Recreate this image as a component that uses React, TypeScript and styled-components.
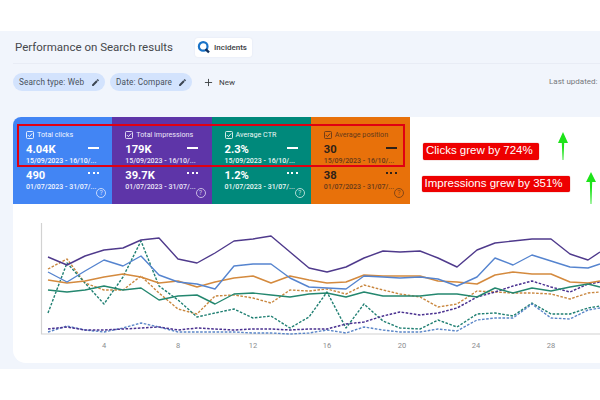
import React from "react";
import styled, { createGlobalStyle } from "styled-components";
import { Plus } from "lucide-react";

const Global = createGlobalStyle`
  html, body { margin: 0; padding: 0; background: #fff; width: 600px; height: 400px; overflow: hidden; }
  * { box-sizing: border-box; }
`;

const Page = styled.div`
  width: 600px;
  height: 400px;
  padding-top: 31px;
  background: #fff;
  font-family: Roboto, "Liberation Sans", sans-serif;
`;
const Surface = styled.main`
  height: 338px;
  background: #f1f5fc;
  padding-left: 13px;
  display: flex;
  flex-direction: column;
`;
const Header = styled.header`
  height: 33px;
  border-bottom: 1px solid #e8ecf5;
  padding: 0 0 0 2px;
  display: flex;
  align-items: center;
`;
const Title = styled.h1`
  margin: 0;
  font-size: 11.5px;
  font-weight: 400;
  color: #46484c;
  width: 180px;
  white-space: nowrap;
`;
const Badge = styled.div`
  width: 57px;
  height: 19px;
  background: #fff;
  border-radius: 3px;
  box-shadow: 0 0 2px #dfe4ee;
  display: flex;
  align-items: center;
  gap: 3px;
  padding-left: 2px;
  font-size: 8px;
  font-weight: 500;
  color: #3c4043;
`;
const Filters = styled.div`
  height: 53px;
  padding-top: 9px;
  display: flex;
  align-items: flex-start;
`;
const Chip = styled.div<{ $w: number }>`
  width: ${(p) => p.$w}px;
  height: 18px;
  margin-right: 5px;
  padding: 0 5px 0 6px;
  border-radius: 9px;
  background: #d3e3fd;
  color: #47505c;
  font-size: 8.2px;
  font-weight: 400;
  letter-spacing: 0.15px;
  display: flex;
  align-items: center;
  justify-content: space-between;
  white-space: nowrap;
`;
const NewButton = styled.div`
  margin-left: 6px;
  height: 18px;
  display: flex;
  align-items: center;
  gap: 5px;
  font-size: 8px;
  font-weight: 400;
  color: #3c4043;
`;
const Updated = styled.div`
  margin-left: auto;
  width: 51px;
  height: 18px;
  line-height: 18px;
  font-size: 8px;
  color: #77797d;
  white-space: nowrap;
`;
const Card = styled.section`
  position: relative;
  height: 246px;
  background: #fff;
  border-radius: 8px 0 0 13px;
`;
const TopRow = styled.div`
  display: flex;
  height: 87px;
`;
const Metrics = styled.div`
  width: 397px;
  display: grid;
  grid-template-columns: repeat(4, 1fr);
  border-radius: 8px 0 0 0;
  overflow: hidden;
`;
const Tile = styled.div<{ $bg: string; $ink: string; $sub: string }>`
  position: relative;
  background: ${(p) => p.$bg};
  color: ${(p) => p.$ink};
  padding: 12px 0 0 13px;
  --sub: ${(p) => p.$sub};
`;
const TileLabel = styled.div`
  display: flex;
  align-items: center;
  gap: 3px;
  height: 11px;
  font-size: 7.2px;
  color: var(--sub);
  white-space: nowrap;
`;
const ValueRow = styled.div<{ $top: number }>`
  display: flex;
  justify-content: space-between;
  align-items: flex-start;
  width: 73px;
  height: 14px;
  margin-top: ${(p) => p.$top}px;
  font-size: 11.2px;
  line-height: 14px;
  font-weight: 700;
`;
const Dash = styled.span`
  width: 11px;
  height: 1.5px;
  margin-top: 4px;
  background: currentColor;
`;
const Dots = styled.span`
  width: 11px;
  margin-top: 3px;
  display: flex;
  justify-content: space-between;
  & > i {
    width: 2px;
    height: 1.5px;
    background: currentColor;
  }
`;
const DateText = styled.div`
  font-size: 7px;
  font-weight: 500;
  line-height: 10px;
  height: 10px;
  margin-top: -1.5px;
  color: var(--sub);
  white-space: nowrap;
`;
const HelpMark = styled.span`
  position: absolute;
  right: 6px;
  bottom: 6px;
  width: 10px;
  height: 10px;
  border: 1px solid var(--sub);
  border-radius: 50%;
  color: var(--sub);
  opacity: 0.75;
  font-size: 7px;
  line-height: 8px;
  text-align: center;
`;
const Notes = styled.aside`
  position: relative;
  flex: 1;
  padding: 26px 0 0 11px;
  display: flex;
  flex-direction: column;
  align-items: flex-start;
  gap: 16px;
`;
const Note = styled.div<{ $w: number; $x: number }>`
  width: ${(p) => p.$w}px;
  margin-left: ${(p) => p.$x}px;
  height: 16.5px;
  line-height: 15.5px;
  padding-left: 3px;
  background: #ee0000;
  border-radius: 2px;
  box-shadow: 0 0 1px #a00;
  color: #fff;
  font-family: "Liberation Sans", Arial, sans-serif;
  font-size: 11.5px;
  white-space: nowrap;
`;
const ArrowMark = styled.svg<{ $x: number; $y: number }>`
  position: absolute;
  left: ${(p) => p.$x}px;
  top: ${(p) => p.$y}px;
`;
const RedFrame = styled.div`
  position: absolute;
  left: 4px;
  top: 7px;
  width: 388px;
  height: 43px;
  border: 2px solid #e00012;
  pointer-events: none;
`;
const ChartSvg = styled.svg`
  display: block;
`;

const Pencil = () => (
  <svg width="9" height="9" viewBox="0 0 24 24" fill="#3c4551">
    <path d="M3 17.25V21h3.75L17.81 9.94l-3.75-3.75L3 17.25zM20.71 7.04a1 1 0 0 0 0-1.41l-2.34-2.34a1 1 0 0 0-1.41 0l-1.83 1.83 3.75 3.75 1.83-1.83z" />
  </svg>
);
const Logo = () => (
  <svg width="14" height="14" viewBox="0 0 14 14" fill="none">
    <circle cx="6.2" cy="6.4" r="4.3" stroke="#1a73c8" strokeWidth="2.2" />
    <path d="M8.5 9.2 12 12.4" stroke="#0f2f5c" strokeWidth="2.4" />
  </svg>
);
const CheckBox = () => (
  <svg width="8" height="8" viewBox="0 0 8 8" fill="none" stroke="currentColor">
    <rect x="0.5" y="0.5" width="7" height="7" rx="1" strokeWidth="0.9" />
    <path d="M1.9 4.1 3.4 5.6 6.2 2.5" strokeWidth="1" />
  </svg>
);

const xs = [48, 67, 85, 104, 123, 141, 159, 178, 197, 215, 234, 253, 271, 290, 309, 327, 346, 364, 383, 400, 420, 438, 457, 477, 495, 513, 532, 551, 570, 588, 600];
const series: { c: string; d?: boolean; w: number; y: number[] }[] = [
  { c: "#c9873f", d: true, w: 1.4, y: [269,259,283,290,290,276,293,309,314,296,295,298,303,290,291,289,294,285,290,294,297,307,304,291,292,293,293,294,299,293,292] },
  { c: "#1f7f72", d: true, w: 1.4, y: [313,263,283,304,277,241,286,300,317,313,309,318,316,328,317,292,328,304,321,328,329,320,327,314,313,316,303,314,314,308,306] },
  { c: "#5b86c8", d: true, w: 1.4, y: [332,326,330,332,328,323,327,332,332,332,332,333,333,334,333,330,333,327,330,332,332,329,331,320,318,318,304,318,319,310,308] },
  { c: "#4a3190", d: true, w: 1.5, y: [329,327,330,330,329,328,327,330,328,329,330,329,329,330,329,329,324,322,316,312,315,313,308,297,292,286,281,287,292,284,282] },
  { c: "#d48a3e", w: 1.6, y: [280,283,281,277,274,277,283,281,287,282,278,276,283,276,280,283,282,275,276,276,276,281,282,284,275,272,274,274,282,283,281] },
  { c: "#24876f", w: 1.4, y: [290,292,290,286,290,288,300,296,295,304,294,293,295,297,294,293,297,292,296,296,296,294,294,297,288,293,288,291,287,284,287] },
  { c: "#5584cf", w: 1.4, y: [272,282,271,260,266,256,275,282,284,289,266,264,264,278,287,288,289,276,277,278,277,279,286,277,258,265,255,261,267,268,264] },
  { c: "#4f3a8c", w: 1.4, y: [257,265,256,250,248,240,238,259,263,253,241,239,236,252,268,272,267,258,251,252,251,258,267,250,243,241,239,239,254,260,252] },
];
const ticks = [
  [104, "4"], [178, "8"], [253, "12"], [327, "16"], [402, "20"], [476, "24"], [551, "28"],
] as const;

const Chart = () => (
  <ChartSvg width="587" height="159" viewBox="13 204 587 159">
    <path d="M41.5 223V334H600" fill="none" stroke="#d2d2d2" strokeWidth="1.2" />
    {series.map((s, i) => (
      <polyline
        key={i}
        points={s.y.map((y, j) => `${xs[j]},${y}`).join(" ")}
        fill="none"
        stroke={s.c}
        strokeWidth={s.w}
        strokeDasharray={s.d ? "2.6 1.5" : undefined}
        strokeLinejoin="round"
      />
    ))}
    {ticks.map(([x, t]) => (
      <text key={t} x={x} y={348} textAnchor="middle" fontSize="7.5" fill="#8b8d90" fontFamily="Roboto, sans-serif">
        {t}
      </text>
    ))}
  </ChartSvg>
);

const metrics = [
  { label: "Total clicks", a: "4.04K", b: "490", bg: "#4285f4", ink: "#fff", sub: "#f2f6ff" },
  { label: "Total impressions", a: "179K", b: "39.7K", bg: "#5e35a8", ink: "#fff", sub: "#ece6f8" },
  { label: "Average CTR", a: "2.3%", b: "1.2%", bg: "#00897b", ink: "#fff", sub: "#eaf7f4" },
  { label: "Average position", a: "30", b: "38", bg: "#e8710a", ink: "#2e2118", sub: "#66391a" },
];

export default function App() {
  return (
    <Page>
      <Global />
      <Surface>
        <Header>
          <Title>Performance on Search results</Title>
          <Badge>
            <Logo />
            Incidents
          </Badge>
        </Header>
        <Filters>
          <Chip $w={92}>
            Search type: Web
            <Pencil />
          </Chip>
          <Chip $w={82}>
            Date: Compare
            <Pencil />
          </Chip>
          <NewButton>
            <Plus size={11} strokeWidth={2} />
            New
          </NewButton>
          <Updated>Last updated:</Updated>
        </Filters>
        <Card>
          <TopRow>
            <Metrics>
              {metrics.map((m) => (
                <Tile key={m.label} $bg={m.bg} $ink={m.ink} $sub={m.sub}>
                  <TileLabel>
                    <CheckBox />
                    {m.label}
                  </TileLabel>
                  <ValueRow $top={3}>
                    {m.a}
                    <Dash />
                  </ValueRow>
                  <DateText>15/09/2023 - 16/10/...</DateText>
                  <ValueRow $top={3.5}>
                    {m.b}
                    <Dots>
                      <i />
                      <i />
                      <i />
                    </Dots>
                  </ValueRow>
                  <DateText>01/07/2023 - 31/07/...</DateText>
                  <HelpMark>?</HelpMark>
                </Tile>
              ))}
            </Metrics>
            <Notes>
              <Note $w={116} $x={2}>Clicks grew by 724%</Note>
              <Note $w={148} $x={0.5}>Impressions grew by 351%</Note>
              <ArrowMark $x={147} $y={15} width="12" height="28" viewBox="0 0 12 28">
                <path d="M6 0 11 11H7.2L6.4 28H5.6L4.8 11H1Z" fill="#1ee31a" />
              </ArrowMark>
              <ArrowMark $x={175} $y={55} width="12" height="32" viewBox="0 0 12 32">
                <path d="M6 0 11 10H7.2L6.4 32H5.6L4.8 10H1Z" fill="#1ee31a" />
              </ArrowMark>
            </Notes>
          </TopRow>
          <Chart />
          <RedFrame />
        </Card>
      </Surface>
    </Page>
  );
}
